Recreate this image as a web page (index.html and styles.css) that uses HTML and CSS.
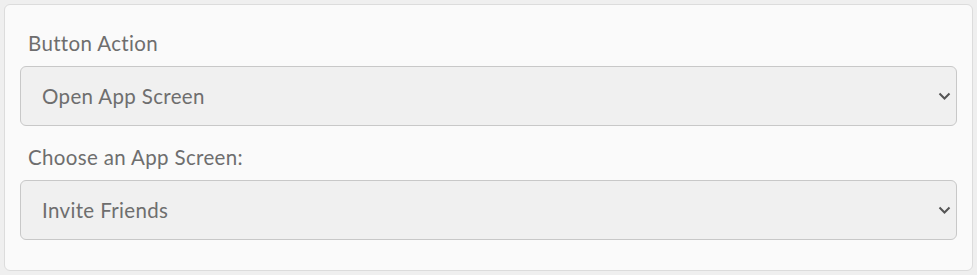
FILE: index.html
```html
<!DOCTYPE html>
<html lang="en">
<head>
  <meta charset="UTF-8">
  <meta name="viewport" content="width=device-width, initial-scale=1.0">
  <title>Button Action</title>
  <link rel="stylesheet" href="styles.css">
</head>
<body>

<section class="panel">
  <label class="field-label" for="action">Button Action</label>
  <div class="select-wrap">
    <select id="action" class="field-select">
      <option>Open App Screen</option>
      <option>Open URL</option>
      <option>Send Email</option>
    </select>
    <svg class="chevron" width="13" height="8" viewBox="0 0 13 8"><path d="M1.5 1.5l5 5 5-5" fill="none" stroke="#555" stroke-width="2"/></svg>
  </div>

  <label class="field-label" for="screen">Choose an App Screen:</label>
  <div class="select-wrap">
    <select id="screen" class="field-select">
      <option>Invite Friends</option>
      <option>Home</option>
      <option>Settings</option>
    </select>
    <svg class="chevron" width="13" height="8" viewBox="0 0 13 8"><path d="M1.5 1.5l5 5 5-5" fill="none" stroke="#555" stroke-width="2"/></svg>
  </div>
</section>

</body>
</html>
```

FILE: styles.css
```css
body { font-family: Lato, "Open Sans", sans-serif; background: #efefef; margin: 0; padding: 4px; }
.panel { background: #fafafa; border: 1px solid #dcdcdc; border-radius: 6px; padding: 26px 15px 30px; display: flex; flex-direction: column; }
.field-label { display: block; font-size: 20.5px; letter-spacing: 0.35px; line-height: 24px; color: #6e6e6e; padding-left: 8px; margin-bottom: 11px; }
.select-wrap { position: relative; margin-bottom: 19px; }
.select-wrap:last-child { margin-bottom: 0; }
.field-select { appearance: none; -webkit-appearance: none; width: 100%; height: 60px; padding: 0 40px 0 21px; font-family: inherit; font-size: 20.5px; letter-spacing: 0.35px; color: #6e6e6e; background: #f0f0f0; border: 1px solid #c8c8c8; border-radius: 6px; outline: none; }
.chevron { position: absolute; right: 6px; top: 26px; pointer-events: none; }
```
